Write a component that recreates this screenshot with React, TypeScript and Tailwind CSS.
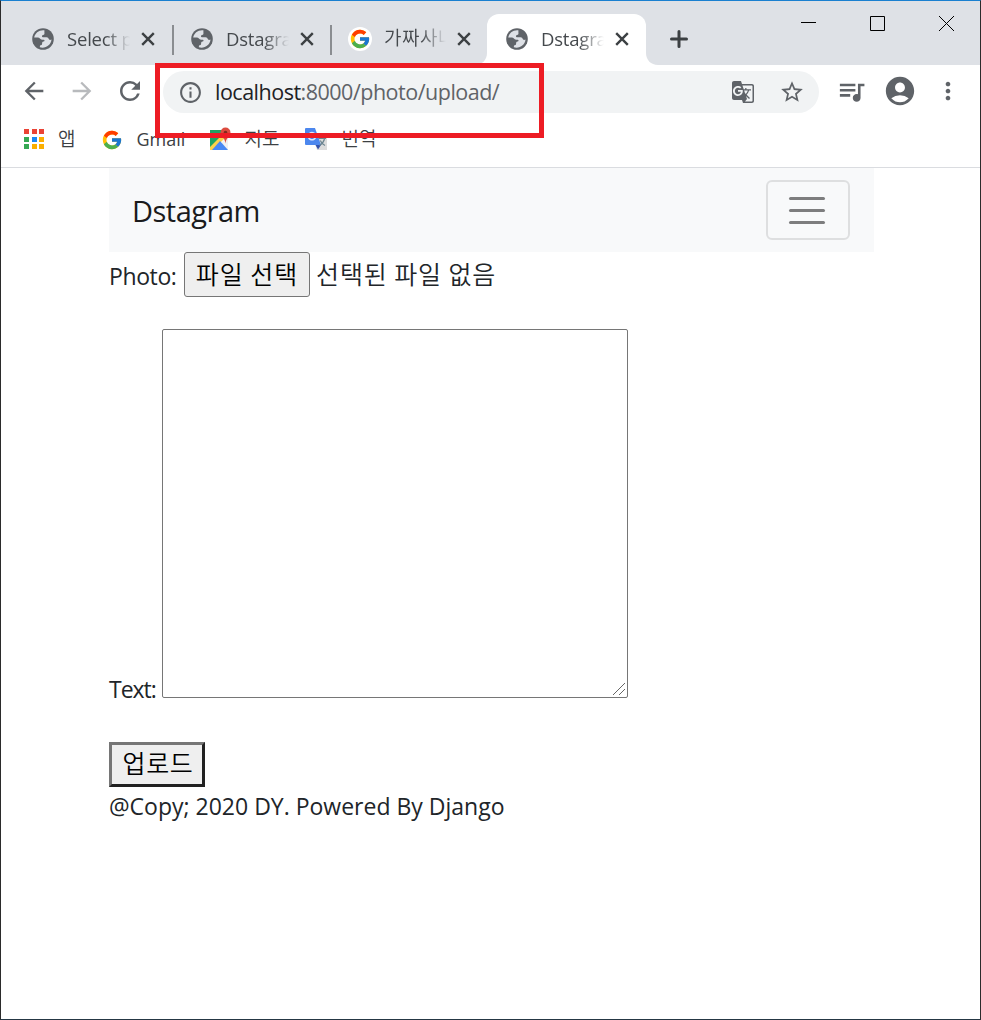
import type { ReactNode } from "react";
import {
  MdArrowBack,
  MdArrowForward,
  MdRefresh,
  MdInfoOutline,
  MdGTranslate,
  MdStarBorder,
  MdQueueMusic,
  MdAccountCircle,
  MdMoreVert,
} from "react-icons/md";
import { FcGoogle } from "react-icons/fc";

function Globe() {
  return (
    <svg viewBox="0 0 22 22" className="size-[22px] shrink-0">
      <circle cx="11" cy="11" r="10.8" fill="#5f6368" />
      <path
        d="M12.4 2.3C7.4 1.6 2.9 5 2.2 9.6h3.6c2 0 2.2 2.2 4.2 2.2h1.6c1.3 0 1.3 1.6 0 1.8-1.4.2-1.5 1-1.5 2.2 0 1.4-.8 1.6-2.1 1.7l-.2 1.8c5.6 1.6 11.3-2.2 11.7-7.8-1.5.9-2.5.3-3-.9-.5-1.2-1.5-1.3-3-1.3H11c-1.4 0-1.4-1.9-.1-2.2 1.7-.3 1.6-1 1.5-2.3z"
        fill="#dee1e6"
      />
    </svg>
  );
}

function Tab({ icon, title, korean }: { icon: ReactNode; title: string; korean?: boolean }) {
  return (
    <>
      <span className="flex w-6 shrink-0 justify-center">{icon}</span>
      <span
        className={
          korean
            ? "ml-3 w-[62px] shrink-0 overflow-hidden whitespace-nowrap pb-1 font-['Noto_Sans_CJK_KR',sans-serif] text-[19px] font-[350] leading-6 tracking-[0.5px] text-[#45494d] mask-r-from-60% mask-r-to-100%"
            : "ml-3 w-[63px] shrink-0 overflow-hidden whitespace-nowrap text-[18.5px] leading-6 tracking-[-0.2px] text-[#45494d] mask-r-from-60% mask-r-to-100%"
        }
      >
        {title}
      </span>
      <svg viewBox="0 0 14 14" className="ml-[11px] size-3.5 shrink-0" stroke="#3c4043" strokeWidth="2.4">
        <path d="m1.2 1.2 11.6 11.6M12.8 1.2 1.2 12.8" />
      </svg>
    </>
  );
}

function MapsIcon() {
  return (
    <svg viewBox="0 0 24 24" className="size-6">
      <path d="M2 3h18v20H2z" fill="#f1f1f1" />
      <path d="M2 3h13v9L3 23H2z" fill="#1fa463" />
      <path d="M2 21 16 7l3 3L6 23H3z" fill="#fff" />
      <path d="M2 20 15 7l3 3L5 23H2z" fill="#fdd34b" />
      <path d="M4 23 12 14l8 9z" fill="#4889f4" />
      <path d="M12.5 5.5a5 5 0 0 1 10 0c0 4-4.5 5-5 11-.5-6-5-7-5-11z" fill="#dc4b3e" />
      <circle cx="17.5" cy="5.6" r="1.8" fill="#7f2a1d" />
    </svg>
  );
}

function TranslateIcon() {
  return (
    <svg viewBox="0 0 24 24" className="size-6">
      <path d="M8 6h13l2 2v15H13z" fill="#dcdcdc" />
      <path d="M2 1h9l6 17H2a1 1 0 0 1-1-1V2a1 1 0 0 1 1-1z" fill="#4c87ee" />
      <path d="m11.5 18 5.5 0-3 4.5z" fill="#3352ad" />
      <path d="M10.8 6.7a3.7 3.7 0 1 0 .8 3.3H8.2" fill="none" stroke="#dfe9fd" strokeWidth="1.5" />
      <path
        d="M14.5 11.5H22M18 10v1.5M20.5 12c-.8 3-2.6 5.2-5 6.5M16.3 13.5c1 2.3 2.5 4 4.7 5"
        fill="none"
        stroke="#6c8590"
        strokeWidth="1.2"
      />
    </svg>
  );
}

const appColors = [
  "bg-[#ea4335]", "bg-[#ea4335]", "bg-[#ea4335]",
  "bg-[#34a853]", "bg-[#1a88f5]", "bg-[#fbaf00]",
  "bg-[#34a853]", "bg-[#fbaf00]", "bg-[#fbaf00]",
];

function TabStrip() {
  return (
    <div className="flex h-16 items-end bg-[#dee1e6]">
      <div className="flex h-[52px] w-[171px] items-center pl-[30px]">
        <Tab icon={<Globe />} title="Select photo" />
      </div>
      <div className="mb-[10px] h-[30px] w-0.5 bg-[#8a8d91]" />
      <div className="flex h-[52px] w-[156px] items-center pl-4">
        <Tab icon={<Globe />} title="Dstagram" />
      </div>
      <div className="mb-[10px] h-[30px] w-0.5 bg-[#8a8d91]" />
      <div className="flex h-[52px] w-[143px] items-center pl-4">
        <Tab
          icon={
            <span className="grid size-6 shrink-0 place-items-center rounded-full bg-white">
              <FcGoogle className="size-[22px]" />
            </span>
          }
          title="가짜사나이"
          korean
        />
      </div>
      <svg viewBox="0 0 12 12" className="size-3 shrink-0" fill="#fff">
        <path d="M12 0v12H0C7 12 12 7 12 0z" />
      </svg>
      <div className="flex h-[51px] w-[159px] shrink-0 items-center rounded-t-xl bg-white pb-px pl-[18px]">
        <Tab icon={<Globe />} title="Dstagram" />
      </div>
      <svg viewBox="0 0 12 12" className="size-3 shrink-0" fill="#fff">
        <path d="M0 0v12h12C5 12 0 7 0 0z" />
      </svg>
      <svg viewBox="0 0 18 18" className="mb-[17px] ml-3 size-[18px] shrink-0" stroke="#3c4043" strokeWidth="3" strokeLinecap="round">
        <path d="M9 1.5v15M1.5 9h15" />
      </svg>
      <svg viewBox="0 0 153 18" className="mb-[33px] ml-[113px] h-[18px] w-[153px] shrink-0" fill="none" stroke="#000">
        <path d="M0 8.5h15M69.5 2.5h14v14h-14z" />
        <path d="m138 2 15 15M153 2l-15 15" />
      </svg>
    </div>
  );
}

function Toolbar() {
  return (
    <div className="flex h-[54px] items-center text-[#5f6368]">
      <MdArrowBack className="-mt-0.5 ml-[19px] size-[28px]" />
      <MdArrowForward className="-mt-0.5 ml-5 size-[28px] text-[#b8babd]" />
      <MdRefresh className="-mt-0.5 ml-[19px] size-[30px]" />
      <div className="ml-[18px] flex h-[42px] w-[656px] items-center rounded-full bg-[#f1f3f4] pl-[15px] pr-[14px]">
        <MdInfoOutline className="size-[25px]" />
        <span className="ml-[12px] -mt-px whitespace-nowrap text-[21.5px] font-normal leading-7 tracking-[-0.5px]">
          <span className="text-[#202124]">localhost</span>:8000/photo/upload/
        </span>
        <MdGTranslate className="ml-auto size-6" />
        <MdStarBorder className="ml-6 size-[26px]" />
      </div>
      <MdQueueMusic className="-mt-0.5 ml-[17px] size-[31px]" />
      <MdAccountCircle className="-mt-0.5 ml-4 size-[34px]" />
      <MdMoreVert className="-mt-0.5 ml-[17px] size-[28px]" />
    </div>
  );
}

function Bookmarks() {
  return (
    <div className="flex h-[49px] items-center border-b border-[#dadce0] pb-[9px] text-[18px] leading-6 text-[#3c4043]">
      <div className="ml-[23px] mt-px grid grid-cols-3 gap-[2.5px]">
        {appColors.map((color, i) => (
          <span key={i} className={`size-[5px] ${color}`} />
        ))}
      </div>
      <span className="-mt-px ml-[14px] font-['Noto_Sans_CJK_KR',sans-serif] text-[19px] font-[350]">앱</span>
      <FcGoogle className="ml-[26px] mt-0.5 size-[22px]" />
      <span className="ml-[13px] mt-px w-[47px]">Gmail</span>
      <span className="ml-[25px] mt-px"><MapsIcon /></span>
      <span className="-mt-px ml-3 w-9 whitespace-nowrap font-['Noto_Sans_CJK_KR',sans-serif] text-[19px] font-[350]">지도</span>
      <span className="ml-[24px] mt-px"><TranslateIcon /></span>
      <span className="-mt-px ml-[13px] font-['Noto_Sans_CJK_KR',sans-serif] text-[19px] font-[350]">번역</span>
    </div>
  );
}

function Page() {
  return (
    <main className="ml-[108px] w-[765px] text-[24px] font-normal leading-9 text-[#212529]">
      <nav className="flex h-[84px] items-center justify-between bg-[#f8f9fa] px-6">
        <a className="-ml-px mt-0.5 text-[29px] tracking-[-0.5px] text-[#1a1b1c]">Dstagram</a>
        <button className="grid h-[60px] w-[84px] place-items-center rounded-md border-2 border-[#dedfe0]">
          <span className="-ml-0.5 flex flex-col gap-[9px]">
            <span className="h-[3px] w-9 rounded-full bg-[#7d7d7e]" />
            <span className="h-[3px] w-9 rounded-full bg-[#7d7d7e]" />
            <span className="h-[3px] w-9 rounded-full bg-[#7d7d7e]" />
          </span>
        </button>
      </nav>
      <div className="flex h-[45px] items-center">
        <label className="mt-[3px] w-[75px] whitespace-nowrap text-[23px] tracking-[-0.4px]">Photo:</label>
        <button className="h-[45px] w-[126px] rounded-[3px] border border-[#767676] bg-[#efefef] pb-1 font-['Noto_Sans_CJK_KR',sans-serif] text-[25px] font-[350] tracking-[1px] text-black">
          파일 선택
        </button>
        <span className="-mt-1 ml-[6px] font-['Noto_Sans_CJK_KR',sans-serif] text-[25px] font-[350] tracking-[0.9px]">선택된 파일 없음</span>
      </div>
      <div className="mt-8 flex items-end">
        <label className="-mb-[9px] w-[53px] text-[23px] tracking-[-1px]">Text:</label>
        <div className="flex h-[369px] w-[466px] items-end justify-end rounded-[2px] border border-[#767676] p-0.5">
          <svg viewBox="0 0 12 12" className="size-3" stroke="#666" strokeWidth="1">
            <path d="M0 12 12 0M6 12l6-6" />
          </svg>
        </div>
      </div>
      <button className="mt-11 flex h-[45px] w-24 items-center justify-center border-[3px] border-b-[#212121] border-l-[#767676] border-r-[#212121] border-t-[#767676] bg-[#efefef] pb-[5px] pl-0.5 font-['Noto_Sans_CJK_KR',sans-serif] text-[25px] font-[350] tracking-[0.7px] text-black">
        업로드
      </button>
      <footer className="mt-px text-[23px]">@Copy; 2020 DY. Powered By Django</footer>
    </main>
  );
}

export default function App() {
  return (
    <div className="relative h-[1020px] w-[981px] overflow-hidden border border-b-[#253744] border-l-[#2b2b2b] border-r-[#2b2b2b] border-t-[#1a80d0] bg-white font-['Open_Sans','Noto_Sans_CJK_KR',sans-serif]">
      <TabStrip />
      <Toolbar />
      <Bookmarks />
      <Page />
      <div className="absolute left-[154px] top-[62px] h-[75px] w-[389px] border-[5px] border-[#ed1c24]" />
    </div>
  );
}
